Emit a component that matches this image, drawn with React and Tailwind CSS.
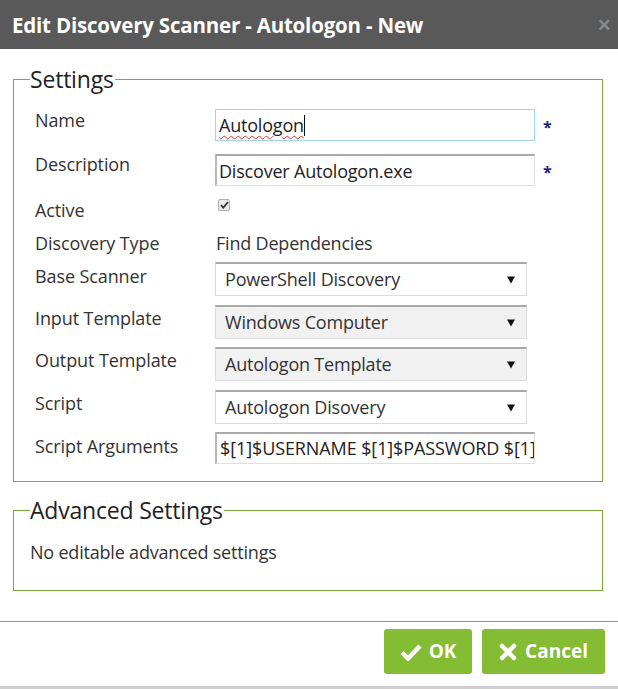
import { useState } from "react";

const font = { fontFamily: '"Open Sans", "Noto Sans", sans-serif' };

function Caret() {
  return (
    <svg width="8" height="8" viewBox="0 0 8 8" className="shrink-0">
      <path d="M0 0.5h8L4 7.5z" fill="#111" />
    </svg>
  );
}

function FakeSelect({ value, grey }) {
  return (
    <div
      className={`flex items-center justify-between h-[34px] w-[312px] pl-[9px] pr-[11px] border border-[#dcdcdc] border-t-[#a9a9a9] border-t-2 text-[18px] tracking-[-0.2px] text-[#333] ${
        grey ? "bg-[#f1f1f1]" : "bg-white"
      }`}
    >
      <span>{value}</span>
      <Caret />
    </div>
  );
}

function Row({ label, labelTop, children, className }) {
  return (
    <div className={`flex items-start ${className || ""}`}>
      <div
        className="w-[180px] shrink-0 text-[18px] tracking-[-0.1px] leading-6 text-[#333]"
        style={{ marginTop: labelTop }}
      >
        {label}
      </div>
      {children}
    </div>
  );
}

function Star() {
  return <span className="ml-[8px] mt-[6px] text-[#1a237e] text-[16px] font-bold">*</span>;
}

export default function App() {
  const [desc, setDesc] = useState("Discover Autologon.exe");

  return (
    <div className="w-[618px] h-[689px] bg-white flex flex-col" style={font}>
      {/* Barra de título */}
      <div className="h-[49px] bg-[#595959] flex items-center justify-between pl-[12px] pr-[7px] shrink-0">
        <span className="text-white font-bold text-[20.5px] tracking-[-0.2px] mt-[2px]">
          Edit Discovery Scanner - Autologon - New
        </span>
        <span className="text-[#8a8a8a] font-bold text-[17px]">✕</span>
      </div>

      <div className="pl-[13px] pr-[15px] pt-[15px]">
        {/* Settings */}
        <fieldset className="border border-[#7cab3d] pl-[21px] pr-[10px] pb-[17px]">
          <legend className="-ml-[5px] text-[23px] leading-[30px] tracking-[-0.2px] text-[#222] pr-[1px]">
            Settings
          </legend>

          <Row label="Name" labelTop="-1px" className="mt-[15px]">
            <div className="h-[32px] w-[320px] border border-[#9fd6ee] pl-[3px] text-[18px] tracking-[-0.2px] text-[#222] leading-[30px] flex items-center">
              <span className="underline decoration-wavy decoration-[#e53935] decoration-1 underline-offset-[3px]">
                Autologon
              </span>
              <span className="w-[1px] h-[21px] bg-[#111]" />
            </div>
            <Star />
          </Row>

          <Row label="Description" labelTop="-2px" className="mt-[13px]">
            <input
              value={desc}
              onChange={(e) => setDesc(e.target.value)}
              className="h-[32px] w-[320px] border border-[#e0e0e0] border-t-2 border-l-2 border-t-[#a9a9a9] border-l-[#b8b8b8] px-[2px] text-[18px] tracking-[-0.2px] text-[#222] outline-none"
            />
            <Star />
          </Row>

          <Row label="Active" labelTop="2px" className="mt-[10px] h-[28px]">
            <div className="mt-[3px] ml-[3px] w-[12px] h-[12px] rounded-[2px] border border-[#b0b0b0] bg-[#e9e9e9] flex items-center justify-center">
              <svg width="9" height="8" viewBox="0 0 9 8">
                <path d="M1 4.2l2.3 2.5L8 1" stroke="#333" strokeWidth="1.8" fill="none" />
              </svg>
            </div>
          </Row>

          <Row label="Discovery Type" labelTop="1px" className="mt-[6px] h-[26px]">
            <div className="mt-[1px] ml-[1px] text-[18px] tracking-[-0.2px] leading-6 text-[#333]">
              Find Dependencies
            </div>
          </Row>

          <Row label="Base Scanner" labelTop="2px" className="mt-[6px]">
            <FakeSelect value="PowerShell Discovery" />
          </Row>
          <Row label="Input Template" labelTop="1px" className="mt-[9px]">
            <FakeSelect value="Windows Computer" grey />
          </Row>
          <Row label="Output Template" labelTop="1px" className="mt-[8px]">
            <FakeSelect value="Autologon Template" grey />
          </Row>
          <Row label="Script" labelTop="1px" className="mt-[9px]">
            <FakeSelect value="Autologon Disovery" />
          </Row>
          <Row label="Script Arguments" labelTop="2px" className="mt-[8px]">
            <div className="h-[32px] w-[320px] border border-[#e0e0e0] border-t-2 border-l-2 border-t-[#a9a9a9] border-l-[#b8b8b8] pl-[3px] text-[18px] tracking-[-0.1px] text-[#222] leading-[28px] overflow-hidden whitespace-nowrap">
              $[1]$USERNAME $[1]$PASSWORD $[1]$DOMAIN
            </div>
          </Row>
        </fieldset>

        {/* Advanced Settings */}
        <fieldset className="mt-[13px] border border-[#7cab3d] pl-[16px] pb-[26px]">
          <legend className="text-[23px] leading-[30px] tracking-[-0.2px] text-[#222] pr-[1px]">
            Advanced Settings
          </legend>
          <div className="mt-[15px] text-[18px] tracking-[-0.2px] leading-6 text-[#333]">
            No editable advanced settings
          </div>
        </fieldset>
      </div>

      {/* Pie con botones */}
      <div className="mt-auto">
        <div className="border-t border-[#7cab3d] flex justify-end gap-[10px] pr-[13px] pt-[7px] pb-[12px]">
          <button className="h-[45px] w-[88px] rounded-[3px] bg-[#84bc34] text-white font-bold text-[19px] flex items-center justify-center gap-[7px]">
            <svg width="22" height="18" viewBox="0 0 22 18">
              <path d="M2 9.5l6 6L20 3" stroke="white" strokeWidth="4.5" fill="none" strokeLinejoin="miter" />
            </svg>
            OK
          </button>
          <button className="h-[45px] w-[123px] rounded-[3px] bg-[#84bc34] text-white font-bold text-[19px] flex items-center justify-center gap-[8px]">
            <svg width="18" height="18" viewBox="0 0 18 18">
              <path d="M3 3l12 12M15 3L3 15" stroke="white" strokeWidth="4.5" strokeLinecap="round" />
            </svg>
            Cancel
          </button>
        </div>
        <div className="h-[3px] bg-[#cfcfcf]" />
      </div>
    </div>
  );
}
